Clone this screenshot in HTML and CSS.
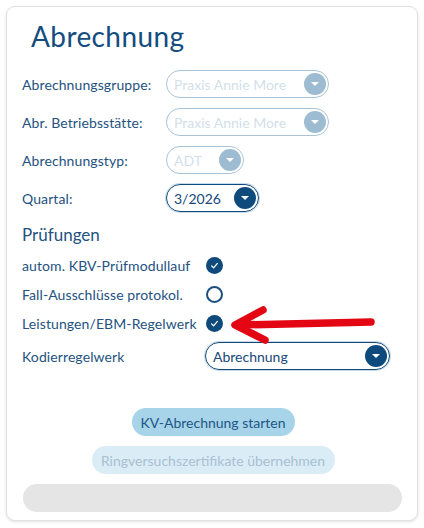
FILE: index.html
```html
<!DOCTYPE html>
<html lang="de">
<head>
<meta charset="utf-8">
<title>Abrechnung</title>
<link rel="stylesheet" href="styles.css">
</head>
<body>
<div class="card">
  <h1 class="title">Abrechnung</h1>

  <div class="form">
    <div class="label">Abrechnungsgruppe:</div>
    <div class="select disabled wide"><span class="val">Praxis Annie More</span><span class="caret"></span></div>

    <div class="label">Abr. Betriebsstätte:</div>
    <div class="select disabled wide"><span class="val">Praxis Annie More</span><span class="caret"></span></div>

    <div class="label">Abrechnungstyp:</div>
    <div class="select disabled short"><span class="val">ADT</span><span class="caret"></span></div>

    <div class="label">Quartal:</div>
    <div class="select active quarter"><span class="val">3/2026</span><span class="caret"></span></div>
  </div>

  <h2 class="section">Prüfungen</h2>

  <div class="checks">
    <div class="label">autom. KBV-Prüfmodullauf</div>
    <div class="check on"><svg viewBox="0 0 17 17" width="17" height="17"><path d="M5.6 8.9 L7.6 10.8 L11.4 6.4" fill="none" stroke="#fff" stroke-width="1.3" stroke-linecap="round" stroke-linejoin="round"/></svg></div>

    <div class="label">Fall-Ausschlüsse protokol.</div>
    <div class="check off"></div>

    <div class="label">Leistungen/EBM-Regelwerk</div>
    <div class="check on"><svg viewBox="0 0 17 17" width="17" height="17"><path d="M5.6 8.9 L7.6 10.8 L11.4 6.4" fill="none" stroke="#fff" stroke-width="1.3" stroke-linecap="round" stroke-linejoin="round"/></svg></div>
  </div>

  <div class="kodier">
    <div class="label">Kodierregelwerk</div>
    <div class="select active full"><span class="val">Abrechnung</span><span class="caret"></span></div>
  </div>

  <div class="actions">
    <button class="btn primary">KV-Abrechnung starten</button>
    <button class="btn muted">Ringversuchszertifikate übernehmen</button>
    <div class="bar"></div>
  </div>

  <svg class="arrow" viewBox="0 0 160 50" width="160" height="50">
    <path d="M151 22 L18 25" fill="none" stroke="#e30613" stroke-width="7.5" stroke-linecap="round"/>
    <path d="M43 10 L15 25 L45 40" fill="none" stroke="#e30613" stroke-width="7.5" stroke-linecap="round" stroke-linejoin="round"/>
  </svg>
</div>
</body>
</html>
```

FILE: styles.css
```css
* { box-sizing: border-box; }

html, body {
  margin: 0;
  padding: 0;
  background: #ffffff;
}

body {
  font-family: "Lato", "Noto Sans", sans-serif;
  color: #24527f;
}

.card {
  position: relative;
  margin: 6px;
  height: 515px;
  border: 1px solid #e2e2e2;
  border-radius: 9px;
  box-shadow: 0 1px 3px rgba(0, 0, 0, 0.12);
  background: #fff;
  padding: 12px 15px 7px 15px;
}

.title {
  margin: 0 0 17px 9px;
  font-weight: 400;
  font-size: 28px;
  line-height: 34px;
  color: #144c80;
  letter-spacing: 0.4px;
}

.label {
  font-size: 14px;
  color: #24527f;
  letter-spacing: 0.1px;
  white-space: nowrap;
}

.form {
  display: grid;
  grid-template-columns: 144px auto;
  row-gap: 10px;
  align-items: center;
  justify-items: start;
}

.select {
  height: 28px;
  border-radius: 14px;
  border: 1px solid #a9c4d8;
  display: flex;
  align-items: center;
  justify-content: space-between;
  padding: 0 2px 0 7px;
  font-size: 14px;
  white-space: nowrap;
}

.select .caret {
  width: 22px;
  height: 22px;
  border-radius: 50%;
  background: #9dbbd1;
  position: relative;
  flex: none;
}

.select .caret::after {
  content: "";
  position: absolute;
  left: 7px;
  top: 9px;
  border-left: 4px solid transparent;
  border-right: 4px solid transparent;
  border-top: 4px solid #fff;
}

.select.disabled .val { color: #d3dfe9; }

.select.active {
  border: 1px solid #0e4a7b;
  box-shadow: 0 0 0 1px #c9dbe8;
}

.select.active .val { color: #17497a; }
.select.active .caret { background: #0e4a7b; }

.wide { width: 163px; }
.short { width: 78px; }
.quarter { width: 93px; }
.full { width: 185px; }

.section {
  margin: 12px 0 8px 0;
  font-weight: 400;
  font-size: 17px;
  line-height: 22px;
  color: #24527f;
}

.checks {
  display: grid;
  grid-template-columns: 184px auto;
  row-gap: 7px;
  align-items: center;
  grid-auto-rows: 22px;
}

.check {
  width: 17px;
  height: 17px;
  border-radius: 50%;
}

.check svg { display: block; }

.check.on { background: #0e4a7b; }

.check.off {
  border: 2px solid #1b4f7f;
  background: #fff;
}

.kodier {
  margin-top: 8px;
  display: grid;
  grid-template-columns: 183px auto;
  align-items: center;
}

.actions {
  margin-top: 38px;
  display: flex;
  flex-direction: column;
  align-items: center;
  gap: 10px;
}

.btn {
  height: 28px;
  border: none;
  border-radius: 14px;
  font-family: "Lato", "Noto Sans", sans-serif;
  font-size: 14px;
  padding: 0;
  margin-left: 2px;
  white-space: nowrap;
}

.btn.primary {
  width: 163px;
  background: #a7d4e8;
  color: #1d5686;
}

.btn.muted {
  width: 243px;
  background: #daedf6;
  color: #a9c0d2;
}

.bar {
  align-self: stretch;
  margin: 0 0 0 1px;
  height: 28px;
  border-radius: 14px;
  background: #e5e5e5;
}

.arrow {
  position: absolute;
  left: 213px;
  top: 293px;
}
```
